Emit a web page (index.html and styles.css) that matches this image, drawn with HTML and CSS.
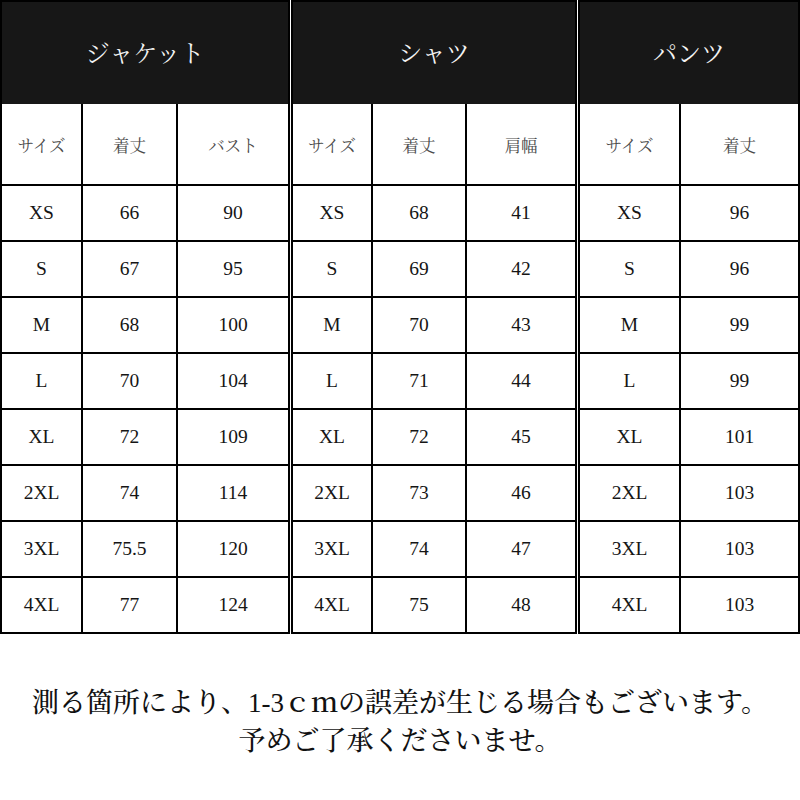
FILE: index.html
```html
<!DOCTYPE html>
<html lang="ja">
<head>
<meta charset="utf-8">
<title>サイズ表</title>
<link rel="stylesheet" href="styles.css">
</head>
<body>
<div class="page">
  <div class="tables">
    <section class="size-table t-jacket">
      <div class="title">ジャケット</div>
      <div class="grid">
        <div class="cell head">サイズ</div><div class="cell head">着丈</div><div class="cell head">バスト</div>
        <div class="cell">XS</div><div class="cell">66</div><div class="cell">90</div>
        <div class="cell">S</div><div class="cell">67</div><div class="cell">95</div>
        <div class="cell">M</div><div class="cell">68</div><div class="cell">100</div>
        <div class="cell">L</div><div class="cell">70</div><div class="cell">104</div>
        <div class="cell">XL</div><div class="cell">72</div><div class="cell">109</div>
        <div class="cell">2XL</div><div class="cell">74</div><div class="cell">114</div>
        <div class="cell">3XL</div><div class="cell">75.5</div><div class="cell">120</div>
        <div class="cell">4XL</div><div class="cell">77</div><div class="cell">124</div>
      </div>
    </section>
    <section class="size-table t-shirt">
      <div class="title">シャツ</div>
      <div class="grid">
        <div class="cell head">サイズ</div><div class="cell head">着丈</div><div class="cell head">肩幅</div>
        <div class="cell">XS</div><div class="cell">68</div><div class="cell">41</div>
        <div class="cell">S</div><div class="cell">69</div><div class="cell">42</div>
        <div class="cell">M</div><div class="cell">70</div><div class="cell">43</div>
        <div class="cell">L</div><div class="cell">71</div><div class="cell">44</div>
        <div class="cell">XL</div><div class="cell">72</div><div class="cell">45</div>
        <div class="cell">2XL</div><div class="cell">73</div><div class="cell">46</div>
        <div class="cell">3XL</div><div class="cell">74</div><div class="cell">47</div>
        <div class="cell">4XL</div><div class="cell">75</div><div class="cell">48</div>
      </div>
    </section>
    <section class="size-table t-pants">
      <div class="title">パンツ</div>
      <div class="grid">
        <div class="cell head">サイズ</div><div class="cell head">着丈</div>
        <div class="cell">XS</div><div class="cell">96</div>
        <div class="cell">S</div><div class="cell">96</div>
        <div class="cell">M</div><div class="cell">99</div>
        <div class="cell">L</div><div class="cell">99</div>
        <div class="cell">XL</div><div class="cell">101</div>
        <div class="cell">2XL</div><div class="cell">103</div>
        <div class="cell">3XL</div><div class="cell">103</div>
        <div class="cell">4XL</div><div class="cell">103</div>
      </div>
    </section>
  </div>
  <div class="note">
    <p>測る箇所により、1-3ｃｍの誤差が生じる場合もございます。</p>
    <p>予めご了承くださいませ。</p>
  </div>
</div>
</body>
</html>
```

FILE: styles.css
```css
* { box-sizing: border-box; }
html, body { margin: 0; padding: 0; background: #fff; }
body {
  font-family: "Liberation Serif", "Noto Serif CJK JP", "Noto Sans CJK JP", serif;
  color: #111;
}
.page { width: 800px; height: 800px; background: #fff; }
.tables { display: flex; gap: 1px; background: #fff; }
.size-table {
  border-top: 2px solid #000;
  border-left: 2px solid #000;
  display: flex;
  flex-direction: column;
}
.title {
  height: 102px;
  background: #171717;
  border-right: 2px solid #000;
  color: #f4f4f4;
  font-size: 24px;
  display: flex;
  align-items: center;
  justify-content: center;
  padding-bottom: 4px;
}
.grid { display: grid; grid-template-rows: 82px repeat(8, 56px); }
.t-jacket .grid { grid-template-columns: 81px 95px 112px; }
.t-shirt .grid { grid-template-columns: 80px 94px 110px; }
.t-pants .grid { grid-template-columns: 101px 119px; }
.cell {
  border-right: 2px solid #000;
  border-bottom: 2px solid #000;
  display: flex;
  align-items: center;
  justify-content: center;
  font-size: 19.5px;
  color: #151515;
}
.cell.head { font-size: 16.5px; color: #4a4a4a; padding-top: 2px; }
.note {
  margin-top: 50px;
  text-align: center;
  font-size: 27px;
  line-height: 38px;
  color: #111;
  font-weight: 500;
}
.note p { margin: 0; }
```
